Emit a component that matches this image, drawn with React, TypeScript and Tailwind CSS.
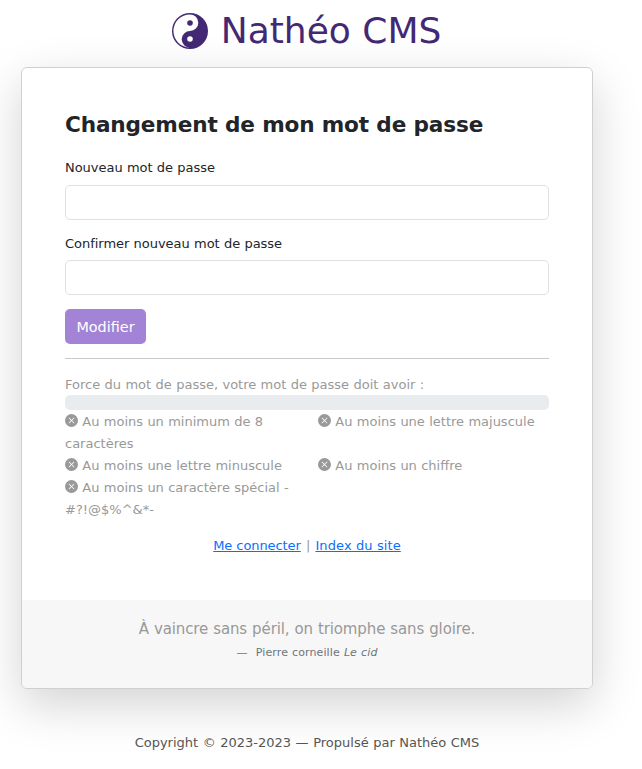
import { BsXCircleFill } from 'react-icons/bs';

function YinYang() {
  return (
    <svg viewBox="0 0 36 36" className="mt-[13px] size-[36px]" aria-hidden="true">
      <circle cx="18" cy="18" r="18" fill="#432874" />
      <path d="M18 1.4A8.3 8.3 0 0 1 18 18A8.3 8.3 0 0 0 18 34.6A16.6 16.6 0 0 1 18 1.4Z" fill="#fff" />
      <circle cx="18" cy="10" r="2.8" fill="#432874" />
      <circle cx="18" cy="26" r="2.8" fill="#fff" />
    </svg>
  );
}

function Field({ id, label }: { id: string; label: string }) {
  return (
    <div className="mb-[13.6px]">
      <label htmlFor={id} className="mb-[6.8px] block h-[20px] text-[13px] leading-[20px] tracking-[-0.03px] [word-spacing:0.2px] text-[#212529]">
        {label}
      </label>
      <input id={id} type="password" className="block h-[34.6px] w-full rounded-[5px] border border-[#dee2e6] bg-white px-3 outline-none" />
    </div>
  );
}

function Rule({ children }: { children: React.ReactNode }) {
  return (
    <div className="pr-3">
      <BsXCircleFill className="inline-block size-[13px] align-[-1px]" /> {children}
    </div>
  );
}

export default function App() {
  return (
    <div className="h-[769px] w-[642px] overflow-hidden bg-white pl-[21px] font-['Verdana','DejaVu_Sans',sans-serif] text-[13px] text-[#999]">
      <div className="flex w-[572px] flex-col">
        <h1 className="flex h-[67px] items-start justify-center gap-[12.5px] text-[36px] text-[#432874]">
          <YinYang />
          <span className="mt-[4px] mr-[0.5px] leading-[54px]">Nathéo CMS</span>
        </h1>
        <main className="h-[622px] overflow-visible rounded-[6px] border border-[#d0d0d1] bg-white shadow-[0_16px_48px_rgba(0,0,0,0.175)]">
          <div className="h-[532px] px-[43px] pt-[43px]">
            <h2 className="mb-[20.4px] h-[27px] text-[21.6px] font-bold leading-[27px] tracking-[-0.15px] text-[#212529]">Changement de mon mot de passe</h2>
            <div className="h-[150.6px]">
              <Field id="password" label="Nouveau mot de passe" />
              <div className="pt-[0.3px]">
                <Field id="confirm" label="Confirmer nouveau mot de passe" />
              </div>
            </div>
            <button type="button" className="block h-[35px] w-[81px] rounded-[5px] bg-[#a283d6] pt-[3px] text-[14.4px] text-white">Modifier</button>
            <hr className="mt-[14px] mb-[15px] border-[#c8c9ca]" />
            <p className="h-[21px] leading-[22px] [word-spacing:0.25px]">Force du mot de passe, votre mot de passe doit avoir :</p>
            <div className="mb-px h-[15px] rounded-[5px] bg-[#e9ecef]" />
            <div className="grid grid-cols-[253px_231px] leading-[22px] [word-spacing:0.2px]">
              <Rule>Au moins un minimum de 8 caractères</Rule>
              <Rule>Au moins une lettre majuscule</Rule>
              <Rule>Au moins une lettre minuscule</Rule>
              <Rule>Au moins un chiffre</Rule>
              <Rule>Au moins un caractère spécial -#?!@$%^&amp;*-</Rule>
            </div>
            <p className="mt-[14px] text-center leading-[22px]">
              <a href="#login" className="tracking-[-0.08px] text-[#0d6efd] underline">Me connecter</a>
              <span className="mx-[1px]"> | </span>
              <a href="#index" className="tracking-[0.1px] text-[#0d6efd] underline">Index du site</a>
            </p>
          </div>
          <figure className="h-[88px] rounded-b-[5px] bg-[#f7f7f7] pt-[18px] text-center">
            <blockquote className="text-[15px] leading-[22px] tracking-[-0.12px] [word-spacing:0.4px]">À vaincre sans péril, on triomphe sans gloire.</blockquote>
            <figcaption className="mt-[4px] text-[11px] leading-[17px] tracking-[0.1px] [word-spacing:0.5px] text-[#6c757d]">—&nbsp; Pierre corneille <cite>Le cid</cite></figcaption>
          </figure>
        </main>
        <footer className="mt-[43px] text-center leading-[22px] [word-spacing:0.4px] text-[#555]">Copyright © 2023-2023 — Propulsé par Nathéo CMS</footer>
      </div>
    </div>
  );
}
